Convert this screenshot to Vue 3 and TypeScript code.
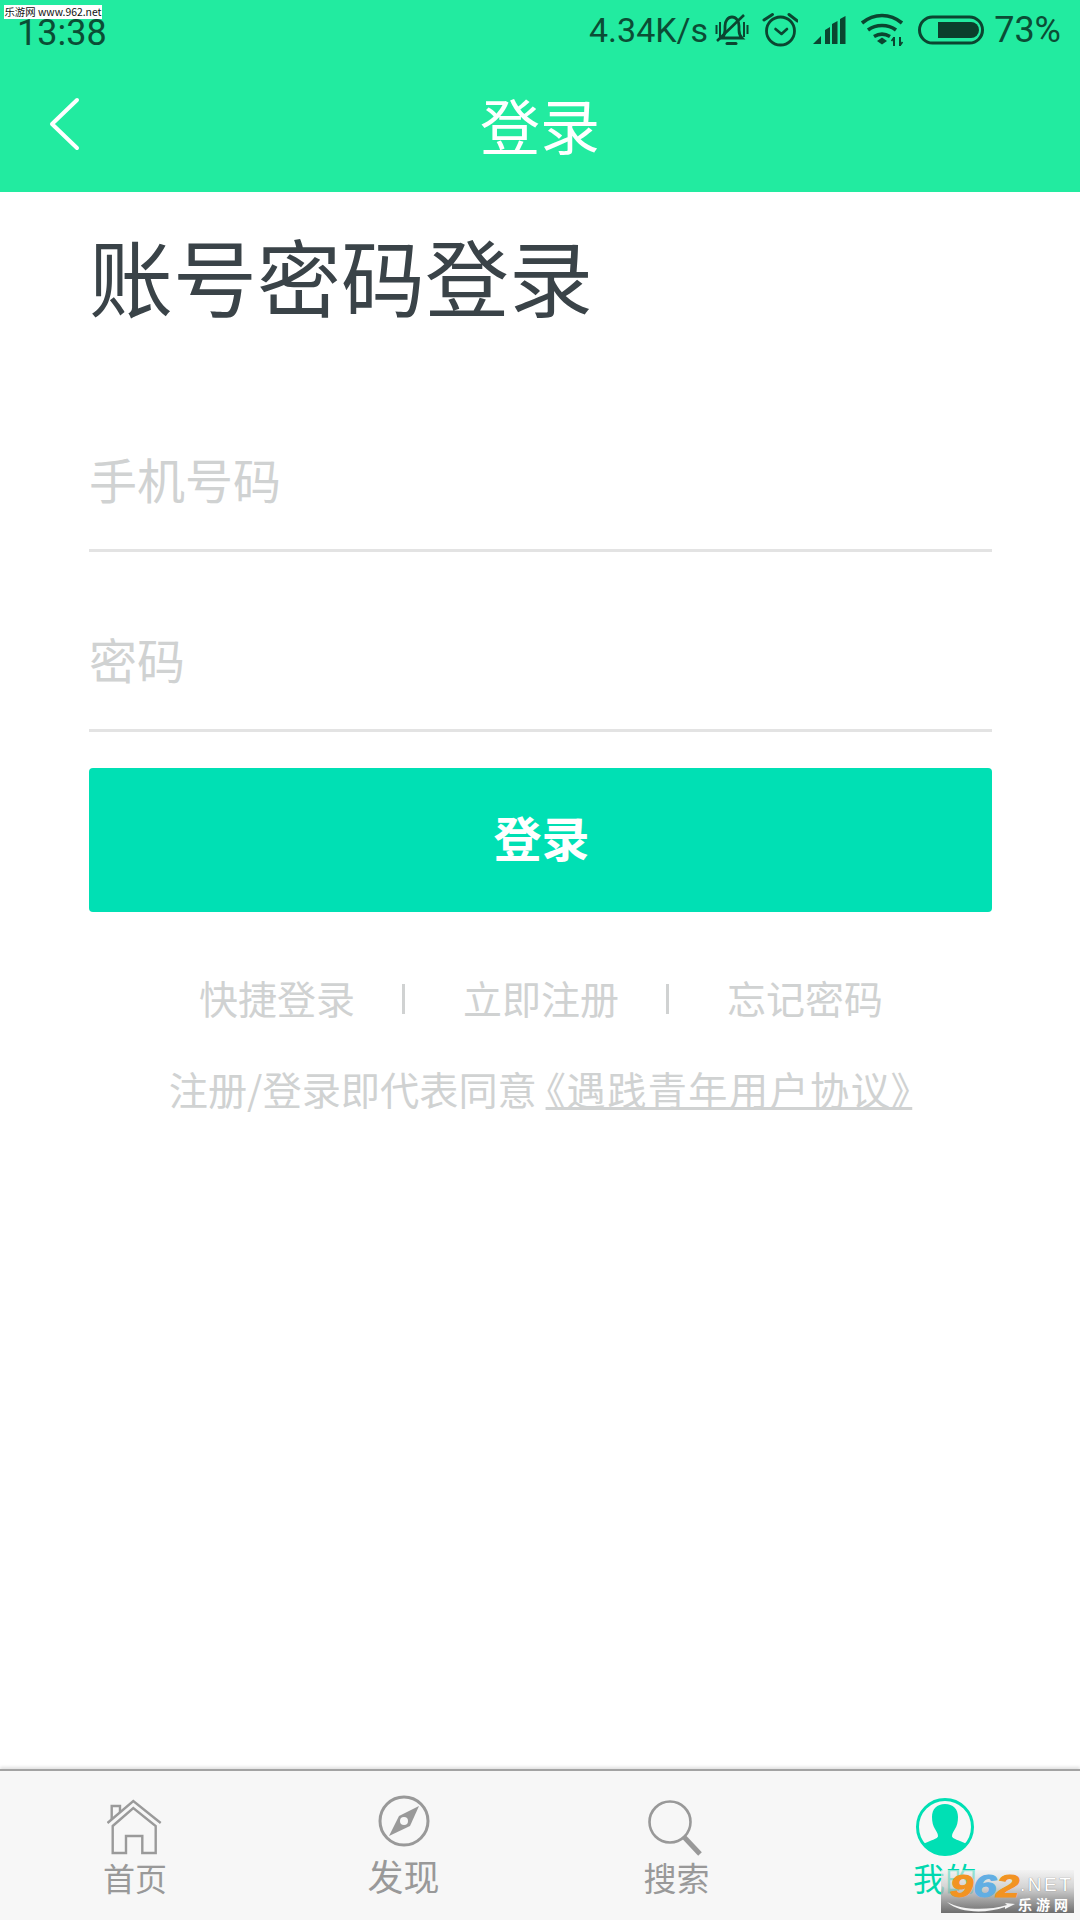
<script setup lang="ts">
const links = ["快捷登录", "立即注册", "忘记密码"];
</script>

<template>
  <div class="page">
    <header class="header">
      <div class="status">
        <span class="time">13:38</span>
        <div class="status-right">
          <span class="speed">4.34K/s</span>
          <svg class="ic-bell" width="34" height="32" viewBox="0 0 34 32" fill="none" stroke="#0b4530" stroke-width="2.8">
            <path d="M7 24c2-2 3-4 3-8v-4c0-5 3-9 7-9s7 4 7 9v4c0 4 1 6 3 8z" />
            <path d="M12 29.5h9" stroke-width="3" stroke-linecap="round" />
            <path d="M1.5 11v9M5 8v15M29 8v15M32.5 11v9" stroke-width="2" />
            <path d="M2 27 29 1" stroke-width="2.6" />
          </svg>
          <svg class="ic-alarm" width="36" height="36" viewBox="0 0 36 36" fill="none" stroke="#0b4530" stroke-width="2.8">
            <circle cx="18.5" cy="19" r="14" />
            <path d="M13.5 17l6 5 5.5-5" stroke-width="2.6" stroke-linecap="round" stroke-linejoin="round" />
            <path d="M2 8l8.5-5.5M35.5 9 27 2.5" stroke-width="3" stroke-linecap="round" />
          </svg>
          <svg class="ic-signal" width="34" height="30" viewBox="0 0 34 30" fill="#0b4530">
            <path d="M0 29l8-8v8zM12 29V15l5-3v17zM19 29V9l5.5-3v23zM27 29V4l5.5-3v28z" />
          </svg>
          <svg class="ic-wifi" width="46" height="34" viewBox="0 0 46 34" fill="none" stroke="#0b4530" stroke-width="3.6">
            <path d="M3 10c12-10 28-10 40 0M9 17c8-6 20-6 28 0M15 23.5c5-3 11-3 16 0" />
            <path d="M18 28l5-3.5 5 3.5-5 3.5z" fill="#0b4530" stroke="none" />
            <path d="M35 24v9M41 24v9" stroke-width="2" />
            <path d="M32.5 28l2.5-3.5M43.5 29l-2.5 3.5" stroke-width="1.6" />
          </svg>
          <svg class="ic-battery" width="66" height="30" viewBox="0 0 66 30">
            <rect x="1.5" y="2" width="63" height="26" rx="13" fill="none" stroke="#0b4530" stroke-width="3" />
            <path d="M20 7h33a8 8 0 0 1 0 16H20z" fill="#0b3f2c" />
          </svg>
          <span class="percent">73%</span>
        </div>
      </div>
      <div class="nav">
        <svg class="back" width="32" height="54" viewBox="0 0 32 54" fill="none" stroke="#fff" stroke-width="4" stroke-linecap="round" stroke-linejoin="round">
          <path d="M28 3 3 27l25 24" />
        </svg>
        <span class="nav-title">登录</span>
      </div>
    </header>

    <main class="main">
      <h1 class="heading">账号密码登录</h1>
      <div class="field field-phone">手机号码</div>
      <div class="field field-pwd">密码</div>
      <button type="button" class="submit"><span>登录</span></button>
      <div class="links">
        <template v-for="(link, i) in links" :key="link">
          <i v-if="i > 0" class="sep"></i>
          <span>{{ link }}</span>
        </template>
      </div>
      <p class="agree">注册/登录即代表同意 <u>《遇践青年用户协议》</u></p>
    </main>

    <nav class="tabs">
      <div class="tab">
        <div class="tab-icon">
          <svg width="56" height="58" viewBox="0 0 56 58" fill="none" stroke="#9a9a9a" stroke-width="2.4">
            <path d="M0.5 24 26.3 2l27.4 22" />
            <path d="M5.7 27 26.3 9l22.4 18v27H35.3V37H19v17H5.700z" />
            <path d="M4.7 20V7H13v6" />
          </svg>
        </div>
        <span class="label">首页</span>
      </div>
      <div class="tab tab-shift">
        <div class="tab-icon">
          <svg class="up" width="52" height="52" viewBox="0 0 52 52" fill="none">
            <circle cx="26" cy="26" r="24" stroke="#999" stroke-width="3" />
            <path d="M41 11 32 31 11 41l10-20z" fill="#999" />
            <circle cx="26" cy="26" r="4" fill="#f7f7f7" />
          </svg>
        </div>
        <span class="label label-big">发现</span>
      </div>
      <div class="tab">
        <div class="tab-icon">
          <svg width="56" height="58" viewBox="0 0 56 58" fill="none" stroke="#999">
            <circle cx="23" cy="23" r="20.5" stroke-width="2.6" />
            <path d="M37 38 53 55" stroke-width="5" />
          </svg>
        </div>
        <span class="label label-search">搜索</span>
      </div>
      <div class="tab tab-on">
        <div class="tab-icon">
          <svg width="60" height="60" viewBox="0 0 60 60">
            <circle cx="30" cy="30" r="27.5" fill="none" stroke="#00e0b4" stroke-width="3" />
            <path d="M30 7c8 0 13 5 13 13 0 5-1 9-3 12-1 2-3 4-3 7 0 2 3 3 8 5l7 3a27 27 0 0 1-44 0l7-3c5-2 8-3 8-5 0-3-2-5-3-7-2-3-3-7-3-12 0-8 5-13 13-13z" fill="#00e0b4" />
          </svg>
        </div>
        <span class="label">我的</span>
      </div>
    </nav>

    <div class="mark-top">乐游网 www.962.net</div>
    <div class="mark-logo">
      <div class="mark-digits"><span class="d1">9</span><span class="d2">6</span><span class="d3">2</span></div>
      <span class="net">.NET</span>
      <svg class="swoosh" width="68" height="12" viewBox="0 0 68 12">
        <path d="M0 1c14 8 40 9 60 3l-2-2 10 1-10 5v-2C38 13 12 12 0 1z" fill="#f4f4f4" />
      </svg>
      <span class="mark-sub">乐游网</span>
    </div>
  </div>
</template>

<style>
html,
body {
  margin: 0;
  background: #fff;
}
</style>

<style scoped>
.page {
  position: relative;
  width: 1080px;
  height: 1920px;
  display: flex;
  flex-direction: column;
  overflow: hidden;
  background: #fff;
  font-family: "Noto Sans CJK SC", "Noto Sans", sans-serif;
}
.header {
  height: 192px;
  background: #22eba0;
  flex: none;
}
.status {
  height: 60px;
  display: flex;
  align-items: center;
  justify-content: space-between;
  padding: 0 19px 0 17px;
  color: #0b4d35;
  font-family: Roboto, "Noto Sans", sans-serif;
  font-size: 36px;
}
.time {
  position: relative;
  top: 3px;
}
.status-right {
  display: flex;
  align-items: center;
}
.speed {
  font-size: 34px;
  margin-right: 7px;
}
.ic-bell {
  margin-right: 13px;
}
.ic-alarm {
  margin-right: 15px;
}
.ic-signal {
  margin-right: 12px;
}
.ic-wifi {
  margin-right: 13px;
}
.ic-battery {
  margin-right: 10px;
}
.nav {
  height: 132px;
  display: flex;
  align-items: center;
  justify-content: center;
  position: relative;
}
.back {
  position: absolute;
  left: 49px;
  top: 37px;
}
.nav-title {
  color: #fff;
  font-size: 60px;
  position: relative;
  top: -3px;
}
.main {
  flex: 1;
  padding: 0 88px 0 89px;
}
.heading {
  margin: 31px 0 0;
  font-size: 84px;
  line-height: 104px;
  font-weight: 400;
  color: #3a4348;
}
.field {
  box-sizing: border-box;
  border-bottom: 3px solid #e3e3e3;
  font-size: 48px;
  line-height: 68px;
  color: #d0d2d2;
}
.field-phone {
  margin-top: 82px;
  height: 143px;
  padding-top: 35px;
}
.field-pwd {
  height: 180px;
  padding-top: 72px;
}
.submit {
  display: block;
  width: 100%;
  height: 144px;
  margin-top: 36px;
  padding: 0 0 8px 2px;
  border: 0;
  border-radius: 4px;
  background: #00e0b4;
  color: #fff;
  font: 700 48px "Noto Sans CJK SC", sans-serif;
}
.links {
  display: flex;
  align-items: center;
  justify-content: center;
  margin-top: 57px;
  padding-left: 1px;
  height: 56px;
  font-size: 39px;
  color: #d0d2d2;
}
.sep {
  width: 3px;
  height: 30px;
  margin: 4px 58px 0 47px;
  background: #d0d2d2;
}
.agree {
  margin: 35px 0 0;
  text-align: center;
  font-size: 39.2px;
  line-height: 56px;
  white-space: nowrap;
  color: #d0d2d2;
}
.agree u {
  font-feature-settings: "palt";
  letter-spacing: 1.4px;
}
.tabs {
  flex: none;
  height: 151px;
  box-sizing: border-box;
  display: grid;
  grid-template-columns: repeat(4, 1fr);
  border-top: 2px solid #a3a3a3;
  background: #f7f7f7;
  box-shadow: 0 -2px 3px rgba(0, 0, 0, 0.12);
}
.tab {
  display: flex;
  flex-direction: column;
  align-items: center;
  color: #999;
}
.tab-shift {
  padding-right: 3px;
}
.tab-icon {
  height: 86px;
  display: flex;
  align-items: flex-end;
}
.up {
  margin-bottom: 10px;
}
.label {
  font-size: 32px;
  line-height: 44px;
  margin-top: -2px;
}
.label-big {
  font-size: 36px;
  margin-top: -4px;
}
.label-search {
  font-size: 33px;
  padding-left: 3px;
}
.tab-on {
  color: #00d8ae;
}
.mark-top {
  position: absolute;
  left: 4px;
  top: 5px;
  width: 98px;
  height: 14px;
  background: #fff;
  color: #111;
  font: 10.4px/14px "Noto Sans CJK SC", sans-serif;
  white-space: nowrap;
  text-align: center;
}
.mark-logo {
  position: absolute;
  left: 941px;
  top: 1870px;
  width: 133px;
  height: 43px;
  background: linear-gradient(180deg, rgba(240, 240, 240, 0.6) 0%, rgba(200, 200, 200, 0.75) 40%, #6e6e6e 100%);
}
.mark-digits {
  position: absolute;
  left: 9px;
  top: 2px;
  width: 54px;
  display: flex;
  font: italic 700 32px/28px "Liberation Sans", sans-serif;
  -webkit-text-stroke: 1px currentColor;
  transform: scaleX(1.3);
  transform-origin: left top;
}
.d1,
.d3 {
  color: #f29322;
}
.d2 {
  color: #62aee3;
}
.net {
  position: absolute;
  left: 79px;
  top: 5px;
  font: 400 19px/20px "Liberation Sans", sans-serif;
  letter-spacing: 2.5px;
  color: #fff;
  text-shadow: 0 0 1px #666;
}
.swoosh {
  position: absolute;
  left: 6px;
  top: 31px;
}
.mark-sub {
  position: absolute;
  left: 77px;
  top: 26px;
  font-size: 14px;
  font-weight: 700;
  line-height: 16px;
  letter-spacing: 4px;
  color: #fff;
}
</style>
